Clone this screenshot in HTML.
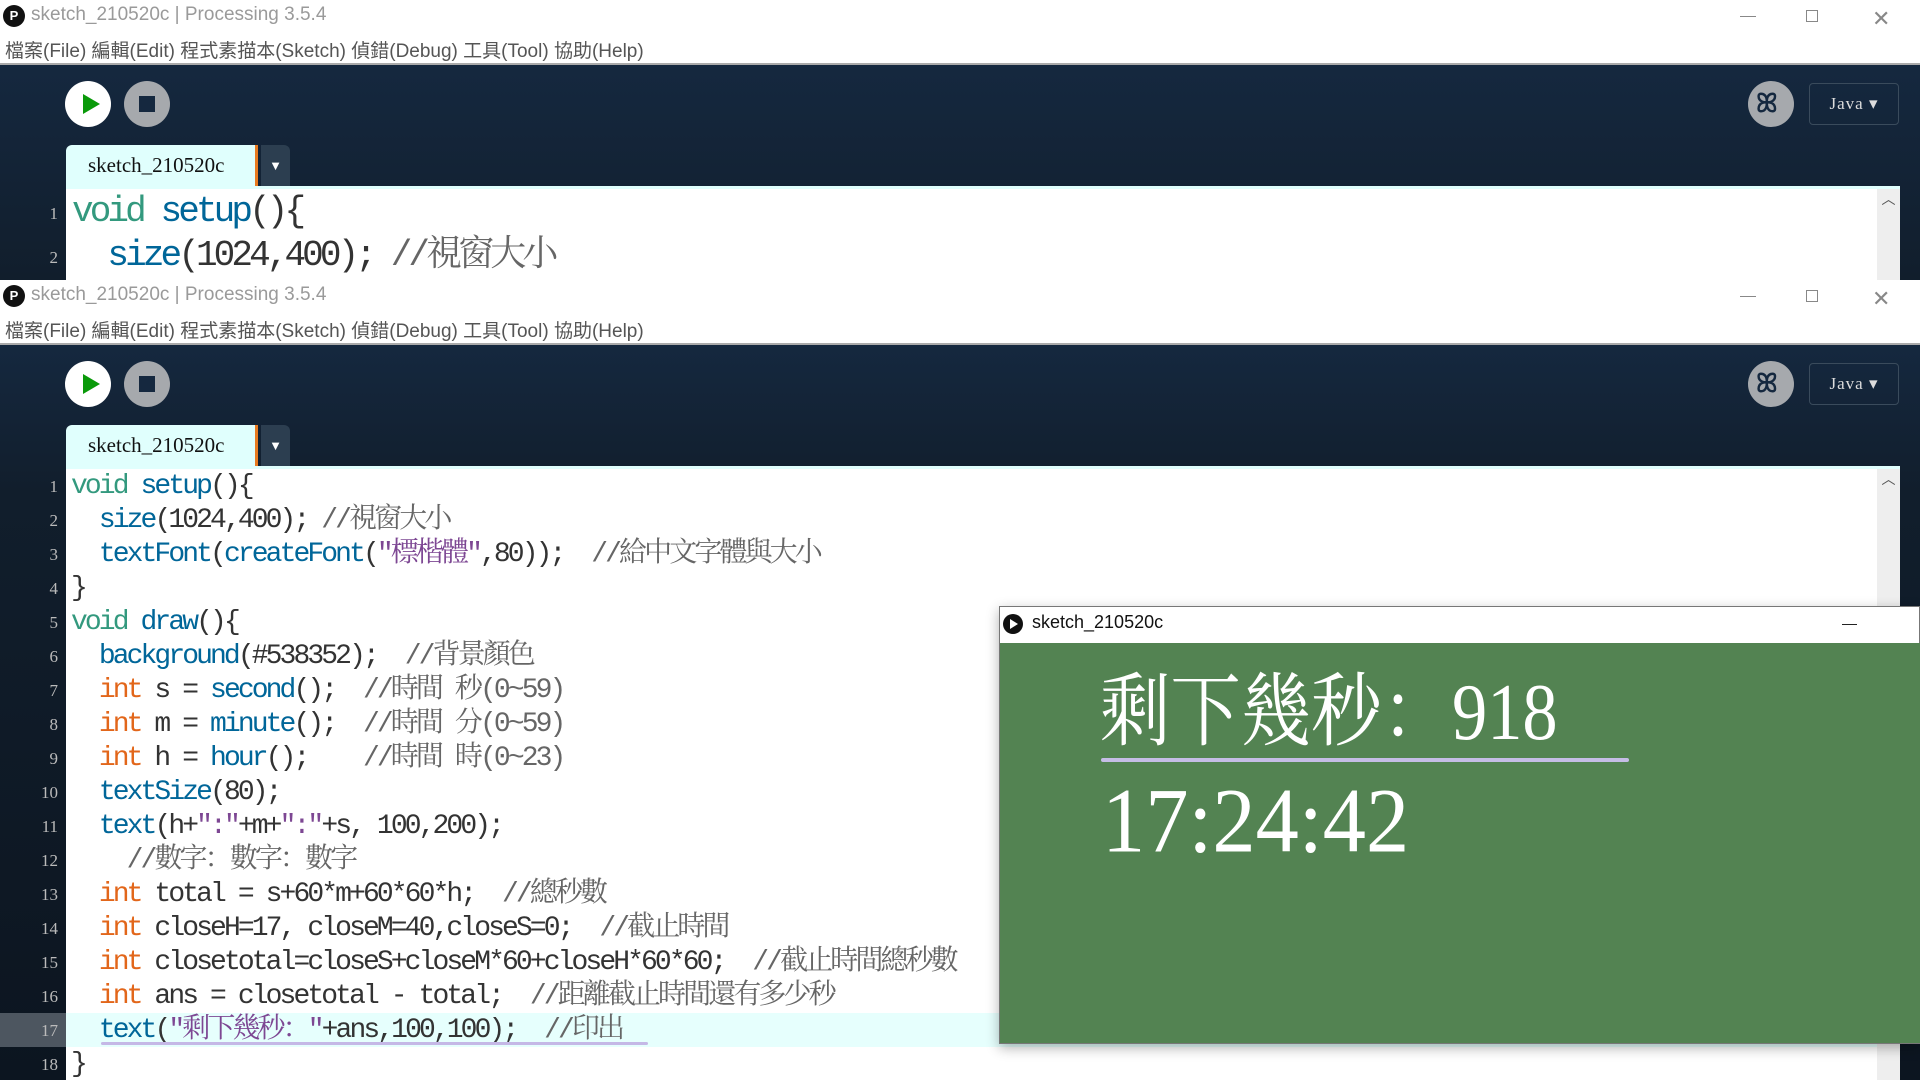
<!DOCTYPE html>
<html><head><meta charset="utf-8">
<style>
*{margin:0;padding:0;box-sizing:border-box}
body{width:1920px;height:1080px;overflow:hidden;position:relative;background:#fff;font-family:"Liberation Sans","Noto Sans CJK TC",sans-serif}
.abs{position:absolute}
.title{left:31px;font-size:19px;color:#9a9a9a;white-space:nowrap}
.menu{left:5px;font-size:19px;color:#555;white-space:nowrap}
.logo{width:22px;height:22px;border-radius:50%;background:#111;color:#fff;font-size:13px;font-weight:bold;text-align:center;line-height:22px;left:3px}
.dark{left:0;width:1920px;background:linear-gradient(#15283f,#111e2c)}
.play{width:46px;height:46px;border-radius:50%;background:#fff}
.stop{width:46px;height:46px;border-radius:50%;background:#a6a9ad}
.dbg{width:46px;height:46px;border-radius:50%;background:#a6a9ad}
.java{width:90px;height:42px;border:1px solid #3a4b5c;border-radius:4px;color:#ddd;font-family:"Liberation Serif",serif;font-size:17px;line-height:40px;text-align:center;letter-spacing:1px}
.tab{left:66px;width:192px;height:41px;background:#e0fffd;border-right:3px solid #e87b20;border-radius:6px 0 0 0;font-family:"Liberation Serif",serif;font-size:21px;color:#111;line-height:41px;padding-left:22px}
.dd{left:261px;width:29px;height:41px;background:#2c3e50;border-radius:0 6px 0 0;color:#fff;font-size:13px;text-align:center;line-height:41px}
.code{white-space:pre;font-family:"Liberation Mono","Noto Serif CJK SC",monospace;color:#333}
.c1 .code{font-size:28px;letter-spacing:-2.9px;line-height:40px;height:40px}
.ln{color:#bbb;font-family:"Liberation Serif",serif;font-size:17px;text-align:right;width:58px;left:0}
.v{color:#33997e}.f{color:#006699}.i{color:#e2661a}.s{color:#7d4793}.m{color:#666}
</style></head><body>

<!-- top window -->
<div class="abs logo" style="top:5px">P</div>
<div class="abs title" style="top:4px">sketch_210520c | Processing 3.5.4</div>
<div class="abs menu" style="top:36px">檔案(File) 編輯(Edit) 程式素描本(Sketch) 偵錯(Debug) 工具(Tool) 協助(Help)</div>
<div class="abs" style="left:1740px;top:16px;width:16px;height:1px;background:#888"></div>
<div class="abs" style="left:1806px;top:10px;width:12px;height:12px;border:1px solid #888"></div>
<div class="abs" style="left:1872px;top:6px;font-size:22px;color:#888">✕</div>
<div class="abs" style="left:0;top:63px;width:1920px;height:2px;background:#aaa"></div>
<div class="abs dark" style="top:65px;height:215px"></div>
<div class="abs play" style="left:65px;top:81px"></div>
<div class="abs" style="left:83px;top:94px;width:0;height:0;border-left:17px solid #0a9a0a;border-top:10px solid transparent;border-bottom:10px solid transparent"></div>
<div class="abs stop" style="left:124px;top:81px"></div>
<div class="abs" style="left:139px;top:96px;width:16px;height:16px;background:#15283f"></div>
<div class="abs dbg" style="left:1748px;top:81px"></div>
<div class="abs" style="left:1756px;top:88px;font-size:26px;color:#15283f;font-weight:bold">ꕤ</div>
<div class="abs java" style="left:1809px;top:83px">Java ▾</div>
<div class="abs tab" style="top:145px">sketch_210520c</div>
<div class="abs dd" style="top:145px">▼</div>
<div class="abs" style="left:66px;top:186px;width:1834px;height:94px;background:#fff;border-top:3px solid #e0fffd"></div>
<div class="abs" style="left:1877px;top:189px;width:23px;height:91px;background:#eee;color:#555;text-align:center;font-size:14px">︿</div>
<div class="abs ln" style="top:204px">1</div>
<div class="abs ln" style="top:248px">2</div>
<div class="abs code" style="left:72px;top:190px;font-size:36px;letter-spacing:-3.9px;line-height:44px"><span class="v">void</span> <span class="f">setup</span>(){</div>
<div class="abs code" style="left:72px;top:234px;font-size:36px;letter-spacing:-3.9px;line-height:44px">  <span class="f">size</span>(1024,400); <span class="m">//視窗大小</span></div>

<!-- second window -->
<div class="abs" style="left:0;top:280px;width:1920px;height:800px;background:#fff"></div>
<div class="abs logo" style="top:285px">P</div>
<div class="abs title" style="top:284px">sketch_210520c | Processing 3.5.4</div>
<div class="abs menu" style="top:316px">檔案(File) 編輯(Edit) 程式素描本(Sketch) 偵錯(Debug) 工具(Tool) 協助(Help)</div>
<div class="abs" style="left:1740px;top:296px;width:16px;height:1px;background:#888"></div>
<div class="abs" style="left:1806px;top:290px;width:12px;height:12px;border:1px solid #888"></div>
<div class="abs" style="left:1872px;top:286px;font-size:22px;color:#888">✕</div>
<div class="abs" style="left:0;top:343px;width:1920px;height:2px;background:#aaa"></div>
<div class="abs dark" style="top:345px;height:735px;background:linear-gradient(#15283f 0,#111e2c 20%,#0c1520 100%)"></div>
<div class="abs play" style="left:65px;top:361px"></div>
<div class="abs" style="left:83px;top:374px;width:0;height:0;border-left:17px solid #0a9a0a;border-top:10px solid transparent;border-bottom:10px solid transparent"></div>
<div class="abs stop" style="left:124px;top:361px"></div>
<div class="abs" style="left:139px;top:376px;width:16px;height:16px;background:#15283f"></div>
<div class="abs dbg" style="left:1748px;top:361px"></div>
<div class="abs" style="left:1756px;top:368px;font-size:26px;color:#15283f;font-weight:bold">ꕤ</div>
<div class="abs java" style="left:1809px;top:363px">Java ▾</div>
<div class="abs tab" style="top:425px">sketch_210520c</div>
<div class="abs dd" style="top:425px">▼</div>
<div class="abs" style="left:66px;top:466px;width:1834px;height:614px;background:#fff;border-top:3px solid #e0fffd"></div>
<div class="abs" style="left:1877px;top:469px;width:23px;height:611px;background:#eee;color:#555;text-align:center;font-size:14px">︿</div>
<div class="abs" style="left:0;top:1013px;width:66px;height:34px;background:#4d5660"></div>
<div class="abs" style="left:66px;top:1013px;width:1811px;height:34px;background:#e6fffd"></div>

<div class="c1">
<div class="abs ln" style="top:477px">1</div><div class="abs code" style="left:71px;top:467px"><span class="v">void</span> <span class="f">setup</span>(){</div>
<div class="abs ln" style="top:511px">2</div><div class="abs code" style="left:71px;top:501px">  <span class="f">size</span>(1024,400); <span class="m">//視窗大小</span></div>
<div class="abs ln" style="top:545px">3</div><div class="abs code" style="left:71px;top:535px">  <span class="f">textFont</span>(<span class="f">createFont</span>(<span class="s">"標楷體"</span>,80));  <span class="m">//給中文字體與大小</span></div>
<div class="abs ln" style="top:579px">4</div><div class="abs code" style="left:71px;top:569px">}</div>
<div class="abs ln" style="top:613px">5</div><div class="abs code" style="left:71px;top:603px"><span class="v">void</span> <span class="f">draw</span>(){</div>
<div class="abs ln" style="top:647px">6</div><div class="abs code" style="left:71px;top:637px">  <span class="f">background</span>(#538352);  <span class="m">//背景顏色</span></div>
<div class="abs ln" style="top:681px">7</div><div class="abs code" style="left:71px;top:671px">  <span class="i">int</span> s = <span class="f">second</span>();  <span class="m">//時間 秒(0~59)</span></div>
<div class="abs ln" style="top:715px">8</div><div class="abs code" style="left:71px;top:705px">  <span class="i">int</span> m = <span class="f">minute</span>();  <span class="m">//時間 分(0~59)</span></div>
<div class="abs ln" style="top:749px">9</div><div class="abs code" style="left:71px;top:739px">  <span class="i">int</span> h = <span class="f">hour</span>();    <span class="m">//時間 時(0~23)</span></div>
<div class="abs ln" style="top:783px">10</div><div class="abs code" style="left:71px;top:773px">  <span class="f">textSize</span>(80);</div>
<div class="abs ln" style="top:817px">11</div><div class="abs code" style="left:71px;top:807px">  <span class="f">text</span>(h+<span class="s">":"</span>+m+<span class="s">":"</span>+s, 100,200);</div>
<div class="abs ln" style="top:851px">12</div><div class="abs code" style="left:71px;top:841px">    <span class="m">//數字：數字：數字</span></div>
<div class="abs ln" style="top:885px">13</div><div class="abs code" style="left:71px;top:875px">  <span class="i">int</span> total = s+60*m+60*60*h;  <span class="m">//總秒數</span></div>
<div class="abs ln" style="top:919px">14</div><div class="abs code" style="left:71px;top:909px">  <span class="i">int</span> closeH=17, closeM=40,closeS=0;  <span class="m">//截止時間</span></div>
<div class="abs ln" style="top:953px">15</div><div class="abs code" style="left:71px;top:943px">  <span class="i">int</span> closetotal=closeS+closeM*60+closeH*60*60;  <span class="m">//截止時間總秒數</span></div>
<div class="abs ln" style="top:987px">16</div><div class="abs code" style="left:71px;top:977px">  <span class="i">int</span> ans = closetotal - total;  <span class="m">//距離截止時間還有多少秒</span></div>
<div class="abs ln" style="top:1021px">17</div><div class="abs code" style="left:71px;top:1011px">  <span class="f">text</span>(<span class="s">"剩下幾秒："</span>+ans,100,100);  <span class="m">//印出</span></div>
<div class="abs ln" style="top:1055px">18</div><div class="abs code" style="left:71px;top:1045px">}</div>
</div>
<div class="abs" style="left:101px;top:1042px;width:547px;height:3px;background:#c5b8e6;border-radius:2px"></div>

<!-- sketch window -->
<div class="abs" style="left:999px;top:606px;width:921px;height:438px;border:1px solid #777;box-shadow:0 4px 12px rgba(0,0,0,.3);background:#fff"></div>
<div class="abs" style="left:1003px;top:614px;width:20px;height:20px;border-radius:50%;background:#111"></div>
<div class="abs" style="left:1010px;top:619px;width:0;height:0;border-left:8px solid #fff;border-top:5px solid transparent;border-bottom:5px solid transparent"></div>
<div class="abs" style="left:1032px;top:612px;font-size:18px;color:#111">sketch_210520c</div>
<div class="abs" style="left:1842px;top:624px;width:15px;height:1px;background:#222"></div>
<div class="abs" style="left:1000px;top:643px;width:920px;height:400px;background:#538352"></div>
<div class="abs" style="left:1100px;top:668px;color:#fff;font-family:'Liberation Serif','Noto Serif CJK SC',serif;font-size:80px;line-height:90px;white-space:nowrap;transform:scaleX(.88);transform-origin:left">剩下幾秒：918</div>
<div class="abs" style="left:1101px;top:758px;width:528px;height:4px;background:#c5bde6;border-radius:2px"></div>
<div class="abs" style="left:1102px;top:770px;color:#fff;font-family:'Liberation Serif',serif;font-size:80px;line-height:90px;white-space:nowrap;transform:scale(1.08,1.15);transform-origin:top left">17:24:42</div>
</body></html>
